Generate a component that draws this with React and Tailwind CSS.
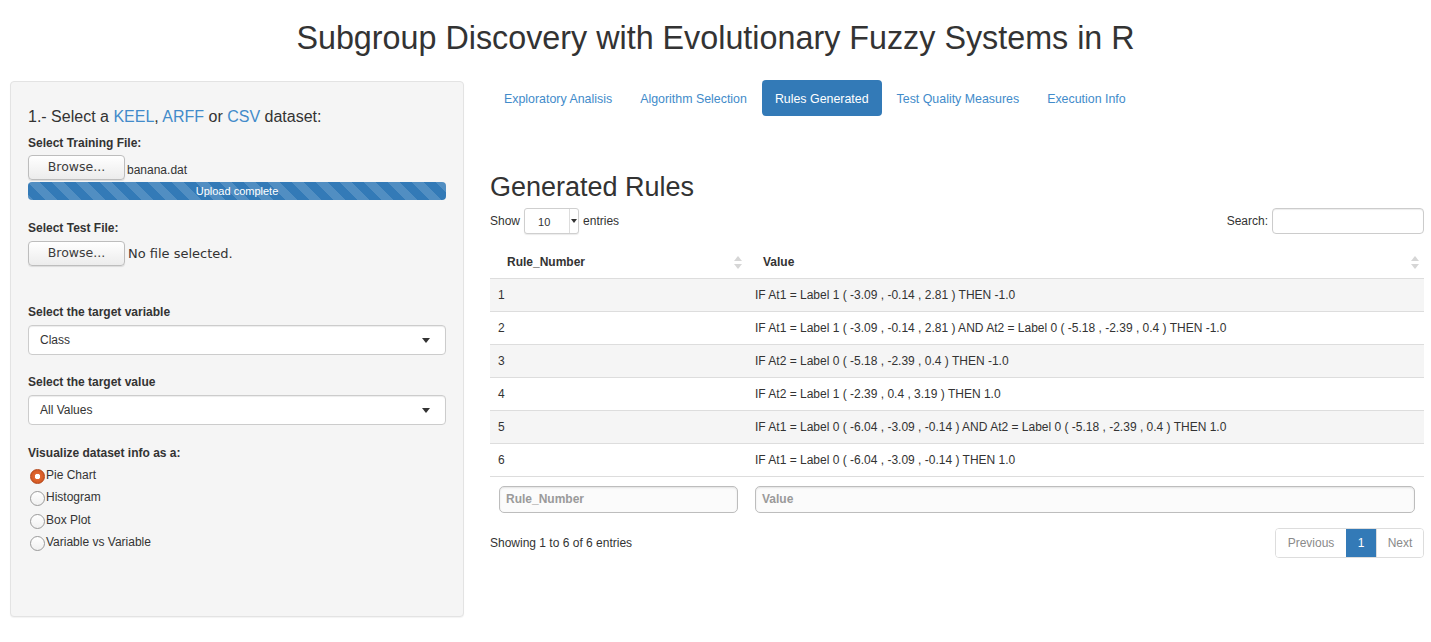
import React from "react";

const rules = [
  "IF At1 = Label 1 ( -3.09 , -0.14 , 2.81 ) THEN -1.0",
  "IF At1 = Label 1 ( -3.09 , -0.14 , 2.81 ) AND At2 = Label 0 ( -5.18 , -2.39 , 0.4 ) THEN -1.0",
  "IF At2 = Label 0 ( -5.18 , -2.39 , 0.4 ) THEN -1.0",
  "IF At2 = Label 1 ( -2.39 , 0.4 , 3.19 ) THEN 1.0",
  "IF At1 = Label 0 ( -6.04 , -3.09 , -0.14 ) AND At2 = Label 0 ( -5.18 , -2.39 , 0.4 ) THEN 1.0",
  "IF At1 = Label 0 ( -6.04 , -3.09 , -0.14 ) THEN 1.0",
];

function SortIcon() {
  return (
    <svg width="8" height="13" viewBox="0 0 8 13" className="shrink-0">
      <path d="M4 0 L8 5 L0 5 Z" fill="#d6d6d6" />
      <path d="M4 13 L8 8 L0 8 Z" fill="#d6d6d6" />
    </svg>
  );
}

function Browse() {
  return (
    <div className="w-[97px] h-[25px] flex items-center justify-center rounded-[4px] border border-[#bdbdbd] bg-[linear-gradient(#ffffff,#ececec)] shadow-[0_1px_1px_rgba(0,0,0,0.1)] font-[family-name:'DejaVu_Sans',sans-serif] text-[12.5px] text-[#3c3c3c]">
      Browse...
    </div>
  );
}

function SelectBox({ value }) {
  return (
    <div className="h-[30px] bg-white border border-[#cccccc] rounded-[4px] shadow-[inset_0_1px_1px_rgba(0,0,0,0.075)] flex items-center pl-[11px] pr-[15px] text-[12px]">
      <span className="flex-1">{value}</span>
      <span className="w-0 h-0 border-l-[4px] border-r-[4px] border-t-[5px] border-l-transparent border-r-transparent border-t-[#333]" />
    </div>
  );
}

function Radio({ checked, label }) {
  return (
    <div className="h-[22.3px] flex items-center">
      {checked ? (
        <span className="mt-[3px] ml-[2px] w-[15px] h-[15px] rounded-full bg-[radial-gradient(circle,#ffffff_0,#ffffff_2.5px,#e0662f_3px,#c94f1b_100%)] border border-[#b44517] shrink-0" />
      ) : (
        <span className="mt-[3px] ml-[2px] w-[15px] h-[15px] rounded-full bg-[linear-gradient(#ffffff,#f0f0f0)] border border-[#9a9a9a] shrink-0" />
      )}
      <span className="text-[12px] ml-[1px]">{label}</span>
    </div>
  );
}

export default function App() {
  return (
    <div className="w-[1431px] h-[642px] overflow-hidden bg-white text-[#333] font-[family-name:'Liberation_Sans',Arial,sans-serif]">
      <h1 className="h-[81px] pt-[19px] text-center text-[32.3px] leading-[38px] font-normal">
        Subgroup Discovery with Evolutionary Fuzzy Systems in R
      </h1>
      <div className="flex">
        {/* Sidebar */}
        <aside className="ml-[10px] w-[454px] h-[536px] bg-[#f5f5f5] border border-[#e3e3e3] rounded-[4px] shadow-[0_1px_1px_rgba(0,0,0,0.05)] pl-[17px] pr-[17px] pt-[25px]">
          <div className="h-[20px] leading-[20px] text-[16px]">
            1.- Select a <span className="text-[#428bca]">KEEL</span>,{" "}
            <span className="text-[#428bca]">ARFF</span> or{" "}
            <span className="text-[#428bca]">CSV</span> dataset:
          </div>
          <div className="mt-[8px] h-[16px] leading-[16px] text-[12px] font-bold">Select Training File:</div>
          <div className="mt-[4px] flex items-center">
            <Browse />
            <span className="ml-[2px] text-[12px] mt-[4px]">banana.dat</span>
          </div>
          <div className="mt-[2px] h-[18px] rounded-[4px] bg-[#337ab7] bg-[linear-gradient(45deg,rgba(255,255,255,.15)_25%,transparent_25%,transparent_50%,rgba(255,255,255,.15)_50%,rgba(255,255,255,.15)_75%,transparent_75%,transparent)] bg-[length:24px_24px] flex items-center justify-center text-white text-[11px]">
            Upload complete
          </div>
          <div className="mt-[20px] h-[16px] leading-[16px] text-[12px] font-bold">Select Test File:</div>
          <div className="mt-[5px] flex items-center">
            <Browse />
            <span className="ml-[3px] text-[13px] font-[family-name:'DejaVu_Sans',sans-serif] text-[#333]">No file selected.</span>
          </div>
          <div className="mt-[38px] h-[16px] leading-[16px] text-[12px] font-bold">Select the target variable</div>
          <div className="mt-[5px]"><SelectBox value="Class" /></div>
          <div className="mt-[19px] h-[16px] leading-[16px] text-[12px] font-bold">Select the target value</div>
          <div className="mt-[5px]"><SelectBox value="All Values" /></div>
          <div className="mt-[20px] h-[16px] leading-[16px] text-[12px] font-bold">Visualize dataset info as a:</div>
          <div className="mt-[3px]">
            <Radio checked label="Pie Chart" />
            <Radio label="Histogram" />
            <Radio label="Box Plot" />
            <Radio label="Variable vs Variable" />
          </div>
        </aside>

        {/* Main */}
        <main className="ml-[26px] w-[934px] -mt-[1px]">
          <nav className="flex pl-[1px] text-[12.4px]">
            {["Exploratory Analisis", "Algorithm Selection", "Rules Generated", "Test Quality Measures", "Execution Info"].map((t, i) => (
              <div
                key={t}
                className={
                  "h-[36px] px-[13px] pt-[2px] flex items-center rounded-[4px] " +
                  (i > 0 ? "ml-[2px] " : "") +
                  (i === 2 ? "bg-[#337ab7] text-white" : "text-[#428bca]")
                }
              >
                {t}
              </div>
            ))}
          </nav>

          <h2 className="mt-[56px] h-[30px] leading-[30px] text-[27px] font-normal">Generated Rules</h2>

          <div className="mt-[6px] h-[26px] flex items-center justify-between text-[12px]">
            <div className="flex items-center">
              <span>Show</span>
              <div className="ml-[4px] mr-[4px] w-[55px] h-[26px] bg-white border border-[#cfcfcf] rounded-[3px] flex items-center text-[11px] shadow-[0_1px_1px_rgba(0,0,0,0.08)]">
                <span className="flex-1 pl-[13px] pt-[3px]">10</span>
                <span className="w-[8px] h-full border-l border-[#ddd] flex items-center justify-center mr-[1px]">
                  <span className="w-0 h-0 border-l-[3px] border-r-[3px] border-t-[4px] border-l-transparent border-r-transparent border-t-[#333]" />
                </span>
              </div>
              <span>entries</span>
            </div>
            <div className="flex items-center">
              <span>Search:</span>
              <div className="ml-[4px] w-[152px] h-[26px] bg-white border border-[#cccccc] rounded-[4px] shadow-[inset_0_1px_1px_rgba(0,0,0,0.075)]" />
            </div>
          </div>

          <table className="mt-[11px] w-[934px] border-collapse text-[12px]">
            <thead>
              <tr className="h-[33px] border-b border-[#dddddd]">
                <th className="w-[256px] p-0 text-left font-bold">
                  <div className="flex items-center pl-[17px] pr-[4px] pt-[2px]">
                    <span className="flex-1">Rule_Number</span>
                    <SortIcon />
                  </div>
                </th>
                <th className="p-0 text-left font-bold">
                  <div className="flex items-center pl-[17px] pr-[5px] pt-[2px]">
                    <span className="flex-1">Value</span>
                    <SortIcon />
                  </div>
                </th>
              </tr>
            </thead>
            <tbody>
              {rules.map((r, i) => (
                <tr key={i} className={"h-[33px] border-b border-[#dddddd] " + (i % 2 === 0 ? "bg-[#f5f5f5]" : "bg-white")}>
                  <td className="pl-[8px]">{i + 1}</td>
                  <td className="pl-[9px]">{r}</td>
                </tr>
              ))}
            </tbody>
            <tfoot>
              <tr className="h-[45px]">
                <td className="pl-[9px] pr-[8px] align-top pt-[9px]">
                  <div className="h-[27px] border border-[#bdbdbd] rounded-[5px] bg-[#fbfbfb] shadow-[inset_0_1px_2px_rgba(0,0,0,0.1)] flex items-center pl-[6px] font-bold text-[#9a9a9a]">
                    Rule_Number
                  </div>
                </td>
                <td className="pl-[9px] pr-[9px] align-top pt-[9px]">
                  <div className="h-[27px] border border-[#bdbdbd] rounded-[5px] bg-[#fbfbfb] shadow-[inset_0_1px_2px_rgba(0,0,0,0.1)] flex items-center pl-[6px] font-bold text-[#9a9a9a]">
                    Value
                  </div>
                </td>
              </tr>
            </tfoot>
          </table>

          <div className="mt-[7px] flex items-center justify-between text-[12px]">
            <span>Showing 1 to 6 of 6 entries</span>
            <div className="flex h-[30px] border border-[#dddddd] rounded-[4px] overflow-hidden">
              <span className="w-[70px] flex items-center justify-center text-[#8a8a8a] bg-white">Previous</span>
              <span className="w-[30px] flex items-center justify-center bg-[#337ab7] text-white">1</span>
              <span className="w-[47px] flex items-center justify-center text-[#8a8a8a] border-l border-[#dddddd] bg-white">Next</span>
            </div>
          </div>
        </main>
      </div>
    </div>
  );
}
